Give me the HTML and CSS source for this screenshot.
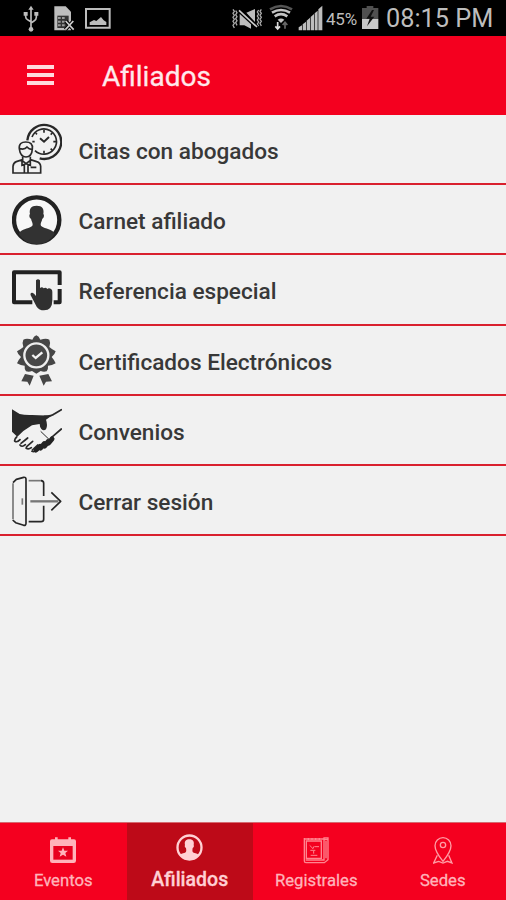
FILE: index.html
```
<!DOCTYPE html>
<html lang="es">
<head>
    <meta charset="UTF-8">
    <meta name="viewport" content="width=device-width, initial-scale=1.0">
    <title>Afiliados</title>
    <link rel="stylesheet" href="styles.css">
</head>
<body>
    <div class="status-bar">
        <div class="status-left">
            <svg width="17" height="36" viewBox="69 0 51 108" fill="none" stroke="#bdbdbd" stroke-width="5">
                <path d="M93 24V88M77 40V50Q77 57 84 60L93 65M109 40V52Q109 59 102 63L93 69"/>
                <path d="M93 17l8 12H85zM71 36h12v11H71zM103 36h12v11h-12z" fill="#bdbdbd" stroke="none"/>
                <circle cx="93" cy="88" r="7" fill="#bdbdbd" stroke="none"/>
            </svg>
            <svg width="21" height="36" viewBox="164 0 63 108">
                <path d="M165 19h34l16 16v56h-50z" fill="#bdbdbd"/>
                <path d="M174 47h34v37h-34z" fill="#333"/>
                <path d="M176 51h8v6h-8zM188 51h8v6h-8zM176 62h8v6h-8zM188 62h8v6h-8zM176 73h8v6h-8zM188 73h8v6h-8z" fill="#999"/>
                <path d="M199 63l24 26M222 63l-24 26" stroke="#000" stroke-width="11"/>
                <path d="M199 63l24 26M222 63l-24 26" stroke="#ccc" stroke-width="5"/>
            </svg>
            <svg width="26" height="36" viewBox="255 0 78 108">
                <path d="M258 27h71v56h-71z" fill="none" stroke="#bdbdbd" stroke-width="6"/>
                <path d="M269 75V67l13-7 7 3 14-12 8 10 8 5v9z" fill="#bdbdbd"/>
            </svg>
        </div>
        <div class="status-right">
            <svg width="31" height="36" viewBox="21 0 93 108" fill="none" stroke="#aaa" stroke-width="4">
                <path d="M24 28l4 6-4 6 4 6-4 6 4 6-4 6 4 6-4 6 4 8M32 32l4 6-4 6 4 6-4 6 4 6-4 6 4 8M101 30l-4 6 4 6-4 6 4 6-4 6 4 6-4 6 4 6M109 28l-4 6 4 6-4 6 4 6-4 6 4 6-4 6 4 8"/>
                <path d="M44 42v34h14l20 10V66L47 39zM64 38l26-11v39z" fill="#bdbdbd" stroke="none"/>
                <path d="M41 31l55 51" stroke="#000" stroke-width="11"/>
                <path d="M42 31l54 50" stroke="#ccc" stroke-width="5"/>
            </svg>
            <svg class="wifi" width="24" height="36" viewBox="130 0 72 108" fill="none">
                <path d="M133 28q33-20 66 0" stroke="#555" stroke-width="8"/>
                <path d="M139 38q27-16 54 0M147 49q19-13 38 0" stroke="#c4c4c4" stroke-width="8"/>
                <path d="M156 59q10-7 20 0l-10 10z" fill="#c4c4c4"/>
                <path d="M156 66v20M149 79l7 8 7-8" stroke="#ddd" stroke-width="5"/>
                <path d="M178 86V68M171 75l7-8 7 8" stroke="#666" stroke-width="5"/>
            </svg>
            <svg class="signal" width="25" height="36" viewBox="219 0 75 108">
                <path d="M221 91v-9l10-6v15zM233 91V73l10-8v26zM245 91V62l10-9v38zM257 91V51l10-9v49zM269 91V40l9-8v59zM280 91V28l12-11v74z" fill="#bdbdbd"/>
            </svg>
            <span class="percent">45%</span>
            <svg class="battery" width="18" height="36" viewBox="405 0 54 108">
                <path d="M408 24h14v-6h20v6h15v34h-49z" fill="#505050"/>
                <path d="M408 57h49v30h-49z" fill="#c8c8c8"/>
                <path d="M438 30l-17 26h10l-8 23 22-29h-11l10-20z" fill="#111"/>
            </svg>
            <span class="clock">08:15 PM</span>
        </div>
    </div>

    <header class="toolbar">
        <div class="menu-btn"><i></i><i></i><i></i></div>
        <h1>Afiliados</h1>
    </header>

    <ul class="options">
        <li class="option">
            <svg class="option-icon" viewBox="36 27 150 156" fill="none" stroke="#282828" stroke-width="5">
                <path d="M82 79A51 51 0 1 1 119 133" stroke-width="7"/>
                <path d="M96 69A38 38 0 1 1 105 110" stroke-width="5"/>
                <path d="M132 47v9M132 110v9M97 83h7M160 83h8M107 57l4 4M157 57l-5 5M157 109l-5-5"/>
                <path d="M120 73l12 10 15-14" stroke-width="6"/>
                <path d="M58 105c-2-16 7-21 19-21 14 0 22 6 20 21-1 16-8 24-19 24s-18-9-20-24zM59 104q15 4 22-5 7 8 16 7"/>
                <path d="M68 128v9l-19 6q-9 3-10 14v20h83v-20q-1-11-12-14l-19-6v-9M66 139l12 10 13-10M78 149l-12 5v-14M78 149l13 5v-14M73 153v23M84 153v23M92 160h17"/>
            </svg>
            <span>Citas con abogados</span>
        </li>
        <li class="option">
            <svg class="option-icon" viewBox="36 27 150 156">
                <circle cx="110" cy="105" r="68" fill="#f8f8f8" stroke="#222" stroke-width="13"/>
                <path d="M110 62c17 0 23 10 20 25 4 4 1 13-3 14-2 9-5 11-5 18 0 9 22 10 35 19q6 4 7 9-19 30-54 30t-54-30q1-5 7-9c13-9 35-10 35-19 0-7-3-9-5-18-4-1-7-10-3-14-3-15 3-25 20-25z" fill="#323232"/>
            </svg>
            <span>Carnet afiliado</span>
        </li>
        <li class="option">
            <svg class="option-icon" viewBox="36 27 150 156">
                <path d="M97 142H42V52h137v38M179 102v40h-18" fill="none" stroke="#222" stroke-width="12" stroke-linejoin="round"/>
                <path d="M108 76q6-7 12 0v23q6-5 11 1 6-5 11 2 5-5 12 1 3 2 3 8v25q0 30-25 30-15 0-22-11l-18-34q-2-9 5-8 5 1 11 10z" fill="#303030"/>
            </svg>
            <span>Referencia especial</span>
        </li>
        <li class="option">
            <svg class="option-icon" viewBox="36 27 150 156">
                <path d="M109 31q8 3 12 13 18-5 27 0 5 10 0 22 9 8 19 13-2 9-12 17 8 9 12 19-11 7-23 7 1 12-4 17-9 3-18-1l-13 8-13-8q-9 4-18 1-5-5-4-17-12 0-23-7 4-10 12-19-10-8-12-17 10-5 19-13-5-12 0-22 9-5 27 0 4-10 12-13z" fill="#464646"/>
                <circle cx="109" cy="91" r="36" fill="#484848" stroke="#eee" stroke-width="7"/>
                <path d="M97 90l10 9 20-17" fill="none" stroke="#f4f4f4" stroke-width="7"/>
                <path d="M75 147l26 5-12 30-7-12-18-1zM145 147l-27 5 13 30 7-12 18-1z" fill="#464646"/>
            </svg>
            <span>Certificados Electrónicos</span>
        </li>
        <li class="option">
            <svg class="option-icon" viewBox="36 27 150 156">
                <path d="M36 40l23 14q16 4 37 3l59 2-17 12q6 17 0 29-7 6-14-1-5-7-5-15l-23 4-26 17-18 17-16-15z" fill="#292929"/>
                <path d="M133 61q23 0 31-8l20-12M154 125l30-26M50 123q-7 6-6 12 7 6 16-4M63 142q13-10 20-16M60 147q6 8 16-1M80 152l18-16M78 156q7 6 16-1M97 162l16-15M96 166q7 3 13-4" fill="none" stroke="#292929" stroke-width="5" stroke-linecap="round"/>
                <path d="M108 162l12-11M122 156l11-13M134 150l10-13M146 141l10-12" stroke="#222" stroke-width="15" stroke-linecap="round"/>
                <path d="M122 106l25 24" stroke="#292929" stroke-width="3"/>
            </svg>
            <span>Convenios</span>
        </li>
        <li class="option">
            <svg class="option-icon" viewBox="36 27 150 156" fill="none" stroke="#262626" stroke-width="5" stroke-linejoin="round">
                <path d="M39 52v108" stroke="#777"/>
                <path d="M39 50l10-10 22-6q7-1 7 6v132q0 7-7 6l-24-8-9-8" />
                <path d="M86 44h39" stroke="#777"/>
                <path d="M123 44q8 0 8 8v38M131 119v41q0 7-8 7H86"/>
                <path d="M67 97v19" stroke="#777"/>
                <path d="M91 106h84" stroke="#777" stroke-width="7"/>
                <path d="M154 79l28 27-28 27"/>
            </svg>
            <span>Cerrar sesión</span>
        </li>
    </ul>

    <nav class="tabs">
        <div class="tab">
            <svg width="26" height="27" viewBox="150 66 78 81">
                <path d="M156 73h9v-6h8v6h32v-6h8v6h9q6 0 6 6v58q0 7-7 7h-64q-7 0-7-7V79q0-6 6-6z" fill="#ffb3ba"/>
                <path d="M160 93h58v41h-58z" fill="#e8001e"/>
                <path d="M189 97l4 10h11l-8 7 3 11-10-6-10 6 3-11-8-7h11z" fill="#ffb3ba"/>
            </svg>
            <span>Eventos</span>
        </div>
        <div class="tab active">
            <svg width="27" height="27" viewBox="529 56 81 81">
                <circle cx="569.500" cy="96.500" r="36" fill="none" stroke="#ffd0d4" stroke-width="7"/>
                <path d="M569 72c12 0 15 8 13 17 2 4 0 8-3 9-1 8-2 12 3 14 8 2 14 4 16 7-7 9-17 15-29 15s-22-6-29-15c2-3 8-5 16-7 5-2 4-6 3-14-3-1-5-5-3-9-2-9 1-17 13-17z" fill="#ffd0d4"/>
            </svg>
            <span>Afiliados</span>
        </div>
        <div class="tab">
            <svg width="26" height="27" viewBox="151 66 78 81" fill="none" stroke="#ff8590" stroke-width="4">
                <path d="M155 69v69q0 5 5 5h55l11-9V69h-12v66h-55M155 72h59M161 78h45v52h-45zM214 74h12M220 78v52M167 69v6M178 69v6M189 69v6M200 69v6"/>
                <path d="M171 91l10 10 4-8M187 95h12M173 106h15M174 121h20M183 108v8" stroke-width="3"/>
            </svg>
            <span>Registrales</span>
        </div>
        <div class="tab">
            <svg width="20" height="27" viewBox="540 66 60 81" fill="none" stroke="#ff9ca5" stroke-width="4">
                <path d="M570 139q-24-30-24-47a24 24 0 0 1 48 0q0 17-24 47z"/>
                <circle cx="570" cy="90" r="8"/>
                <path d="M553 121l-11 23 15-5 13 5 13-5 14 5-10-23"/>
            </svg>
            <span>Sedes</span>
        </div>
    </nav>
</body>
</html>
```
FILE: styles.css
```
body {
    margin: 0;
    height: 900px;
    display: flex;
    flex-direction: column;
    overflow: hidden;
    background: #f1f1f1;
    font-family: Roboto, sans-serif;
}
svg {
    display: block;
    flex: none;
}
.status-bar {
    height: 36px;
    flex: none;
    display: flex;
    justify-content: space-between;
    background: #000;
    color: #bdbdbd;
}
.status-left {
    display: flex;
    padding-left: 23px;
    gap: 14px;
}
.status-left svg:last-child {
    margin-left: -4px;
}
.status-right {
    display: flex;
    align-items: center;
    padding-right: 13px;
    white-space: nowrap;
}
.wifi {
    margin-left: 6px;
}
.signal {
    margin-left: 5px;
}
.percent {
    width: 32px;
    margin-left: 3px;
    font-size: 17px;
    letter-spacing: -0.2px;
    padding-top: 2px;
}
.battery {
    margin-left: 3px;
}
.clock {
    width: 107px;
    margin-left: 7px;
    font-size: 25.3px;
    padding-top: 1px;
}
.toolbar {
    height: 78.7px;
    flex: none;
    display: flex;
    align-items: center;
    background: #f4001f;
    color: #ffe9eb;
}
.menu-btn {
    width: 27px;
    margin-left: 26.5px;
    display: flex;
    flex-direction: column;
    gap: 4px;
}
.menu-btn i {
    height: 4px;
    background: #ffd9dc;
}
.toolbar h1 {
    margin: 3px 0 0 48.5px;
    font-size: 28px;
    font-weight: 400;
    -webkit-text-stroke: 0.3px;
}
.options {
    list-style: none;
    margin: 0;
    padding: 0;
    flex: 1;
}
.option {
    height: 70.3px;
    box-sizing: border-box;
    display: flex;
    align-items: center;
    padding: 1px 0 0 12px;
    border-bottom: 2px solid #d9202e;
    color: #383838;
    font-size: 22.6px;
    font-weight: 500;
}
.option-icon {
    width: 50px;
    height: 52px;
    margin-right: 16.5px;
}
.option span {
    padding-top: 4px;
}
.tabs {
    height: 78px;
    flex: none;
    display: grid;
    grid-template-columns: repeat(4, 1fr);
    box-sizing: border-box;
    border-top: 1px solid #d56a70;
    background: #f4001f;
}
.tab {
    display: flex;
    flex-direction: column;
    align-items: center;
    padding-top: 14px;
    color: #ffb3ba;
    font-size: 16.7px;
    -webkit-text-stroke: 0.3px;
}
.tab span {
    margin-top: 7px;
    line-height: 20px;
}
.tab.active {
    padding-top: 11px;
    background: #bd0a18;
    color: #ffd0d4;
    font-size: 19.5px;
    font-weight: 500;
}
.tab.active span {
    margin-top: 9px;
}
```
